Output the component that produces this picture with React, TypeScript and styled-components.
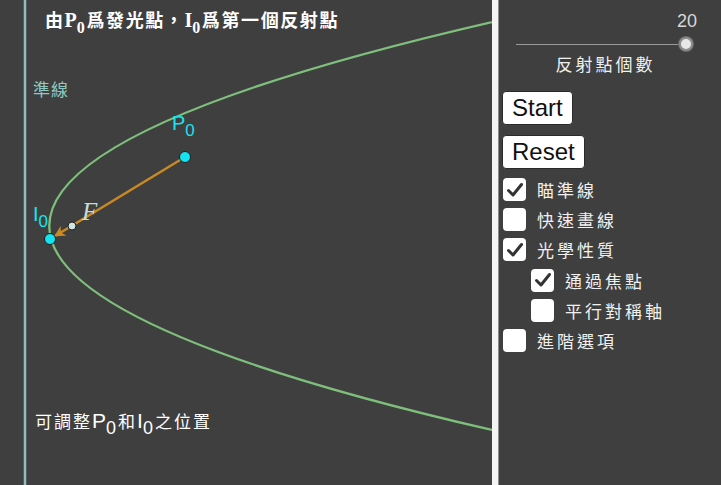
import React from "react";
import styled, { createGlobalStyle } from "styled-components";

const GlobalStyle = createGlobalStyle`
  html, body {
    margin: 0;
    padding: 0;
    background: #3f3f3f;
  }
  body {
    font-family: "Liberation Sans", "Noto Sans CJK TC", sans-serif;
  }
`;

const CJK = `"Noto Sans CJK TC", "Noto Sans CJK SC", sans-serif`;

interface ICheck {
  label: string;
  checked: boolean;
  indent?: boolean;
}

const options: ICheck[] = [
  { label: "瞄準線", checked: true },
  { label: "快速畫線", checked: false },
  { label: "光學性質", checked: true },
  { label: "通過焦點", checked: true, indent: true },
  { label: "平行對稱軸", checked: false, indent: true },
  { label: "進階選項", checked: false },
];

function Graph() {
  return (
    <GraphSvg width="492" height="485" viewBox="0 0 492 485">
      <defs>
        <marker
          id="head"
          viewBox="0 0 10 10"
          refX="9"
          refY="5"
          markerWidth="4.5"
          markerHeight="4.5"
          orient="auto"
        >
          <path d="M0,0 L10,5 L0,10 L3,5 Z" fill="#c98a24" />
        </marker>
      </defs>
      <line x1="25" y1="0" x2="25" y2="485" stroke="#8fbcbf" strokeWidth="2.5" />
      <path
        d="M492,22 Q-393.5,226 492,430"
        fill="none"
        stroke="#7fbf7c"
        strokeWidth="2.3"
      />
      <line
        x1="185"
        y1="157"
        x2="55"
        y2="236"
        stroke="#c98a24"
        strokeWidth="2.5"
        markerEnd="url(#head)"
      />
      <circle cx="72" cy="226" r="4" fill="#cfe6e4" stroke="#1e1e1e" strokeWidth="1" />
      <circle cx="185" cy="157" r="5.5" fill="#14e4ef" stroke="#1e1e1e" strokeWidth="1" />
      <circle cx="50" cy="239" r="5.5" fill="#14e4ef" stroke="#1e1e1e" strokeWidth="1" />
    </GraphSvg>
  );
}

export default function App() {
  return (
    <>
      <GlobalStyle />
      <Screen>
        <Canvas>
          <Graph />
          <Title>
            由<Latin>P</Latin>
            <Sub>0</Sub>爲發光點，<Latin>I</Latin>
            <Sub>0</Sub>爲第一個反射點
          </Title>
          <Directrix>準線</Directrix>
          <PointLabel $x={172} $y={112}>
            P<PointSub>0</PointSub>
          </PointLabel>
          <PointLabel $x={33} $y={203}>
            I<PointSub>0</PointSub>
          </PointLabel>
          <FocusLabel>F</FocusLabel>
          <Hint>
            可調整<HintLatin>P</HintLatin>
            <HintSub>0</HintSub>和<HintLatin>I</HintLatin>
            <HintSub>0</HintSub>之位置
          </Hint>
        </Canvas>
        <Divider />
        <Panel>
          <SliderBlock>
            <SliderValue>20</SliderValue>
            <Track>
              <Thumb />
            </Track>
            <SliderLabel>反射點個數</SliderLabel>
          </SliderBlock>
          <Button>Start</Button>
          <Button>Reset</Button>
          <CheckList>
            {options.map((opt) => (
              <CheckRow key={opt.label} $indent={opt.indent}>
                <Box>
                  {opt.checked && (
                    <svg width="20" height="20" viewBox="0 0 20 20">
                      <path
                        d="M3.5 10.5 L8 15 L16.5 4.5"
                        fill="none"
                        stroke="#333"
                        strokeWidth="3"
                        strokeLinecap="round"
                        strokeLinejoin="round"
                      />
                    </svg>
                  )}
                </Box>
                <CheckLabel>{opt.label}</CheckLabel>
              </CheckRow>
            ))}
          </CheckList>
        </Panel>
      </Screen>
    </>
  );
}

const Screen = styled.div`
  display: flex;
  width: 721px;
  height: 485px;
  overflow: hidden;
  background: #3f3f3f;
`;
const Canvas = styled.div`
  position: relative;
  width: 492px;
  height: 485px;
  flex-shrink: 0;
`;
const GraphSvg = styled.svg`
  display: block;
`;
const Title = styled.div`
  position: absolute;
  left: 45px;
  top: 6px;
  color: #ffffff;
  font-family: ${CJK};
  font-weight: 700;
  font-size: 18px;
  letter-spacing: 1.6px;
  white-space: nowrap;
`;
const Latin = styled.span`
  font-family: "Liberation Serif", serif;
  font-size: 20px;
  font-weight: 700;
  letter-spacing: 0;
`;
const Sub = styled.sub`
  font-family: "Liberation Serif", serif;
  font-size: 16px;
  font-weight: 700;
  vertical-align: -6px;
  line-height: 0;
`;
const Directrix = styled.div`
  position: absolute;
  left: 33px;
  top: 76px;
  color: #8fc8c0;
  font-family: ${CJK};
  font-size: 17px;
  letter-spacing: 1px;
`;
const PointLabel = styled.div<{ $x: number; $y: number }>`
  position: absolute;
  left: ${(p) => p.$x}px;
  top: ${(p) => p.$y}px;
  color: #14e4ef;
  font-family: "Liberation Sans", sans-serif;
  font-size: 20px;
`;
const PointSub = styled.sub`
  font-size: 17px;
  vertical-align: -6px;
  line-height: 0;
`;
const FocusLabel = styled.div`
  position: absolute;
  left: 82px;
  top: 198px;
  color: #c4dcdc;
  font-family: "Liberation Serif", serif;
  font-style: italic;
  font-size: 25px;
`;
const Hint = styled.div`
  position: absolute;
  left: 35px;
  top: 408px;
  color: #ffffff;
  font-family: ${CJK};
  font-size: 17px;
  letter-spacing: 2px;
  white-space: nowrap;
`;
const HintLatin = styled.span`
  font-family: "Liberation Sans", sans-serif;
  font-size: 21px;
  letter-spacing: 0;
`;
const HintSub = styled.sub`
  font-family: "Liberation Sans", sans-serif;
  font-size: 18px;
  vertical-align: -6px;
  line-height: 0;
`;
const Divider = styled.div`
  width: 6px;
  flex-shrink: 0;
  background: #f4f4f4;
  border-right: 1px solid #8a8a8a;
`;
const Panel = styled.div`
  flex: 1;
  display: flex;
  flex-direction: column;
  align-items: flex-start;
  padding: 10px 0 0 3px;
`;
const SliderBlock = styled.div`
  display: flex;
  flex-direction: column;
  align-items: center;
  width: 195px;
  margin-bottom: 15px;
`;
const SliderValue = styled.div`
  align-self: flex-end;
  color: #d8d8d8;
  font-size: 18px;
  line-height: 22px;
`;
const Track = styled.div`
  position: relative;
  align-self: flex-end;
  width: 170px;
  height: 1px;
  margin: 12px 11px 0 0;
  background: #9a9a9a;
`;
const Thumb = styled.div`
  position: absolute;
  right: -7px;
  top: -7px;
  width: 10px;
  height: 10px;
  border-radius: 50%;
  background: #e8e8e8;
  border: 2.5px solid #8e8e8e;
  box-shadow: 0 0 0 1px #6a6a6a;
`;
const SliderLabel = styled.div`
  margin-top: 6px;
  padding-left: 12px;
  color: #f0f0f0;
  font-family: ${CJK};
  font-size: 17px;
  letter-spacing: 3px;
`;
const Button = styled.button`
  height: 34px;
  padding: 0 9px;
  margin-bottom: 10px;
  background: #ffffff;
  color: #111;
  border: 1px solid #2a2a2a;
  border-radius: 4px;
  font-family: "Liberation Sans", sans-serif;
  font-size: 24px;
  cursor: pointer;
`;
const CheckList = styled.div`
  display: flex;
  flex-direction: column;
  gap: 7.2px;
  margin-top: -1px;
`;
const CheckRow = styled.div<{ $indent?: boolean }>`
  display: flex;
  align-items: center;
  gap: 11px;
  height: 23px;
  padding-left: ${(p) => (p.$indent ? "29px" : "1px")};
`;
const Box = styled.div`
  width: 23px;
  height: 23px;
  display: flex;
  align-items: center;
  justify-content: center;
  background: #ffffff;
  border-radius: 4px;
`;
const CheckLabel = styled.span`
  color: #f0f0f0;
  font-family: ${CJK};
  font-size: 17px;
  letter-spacing: 3px;
`;
